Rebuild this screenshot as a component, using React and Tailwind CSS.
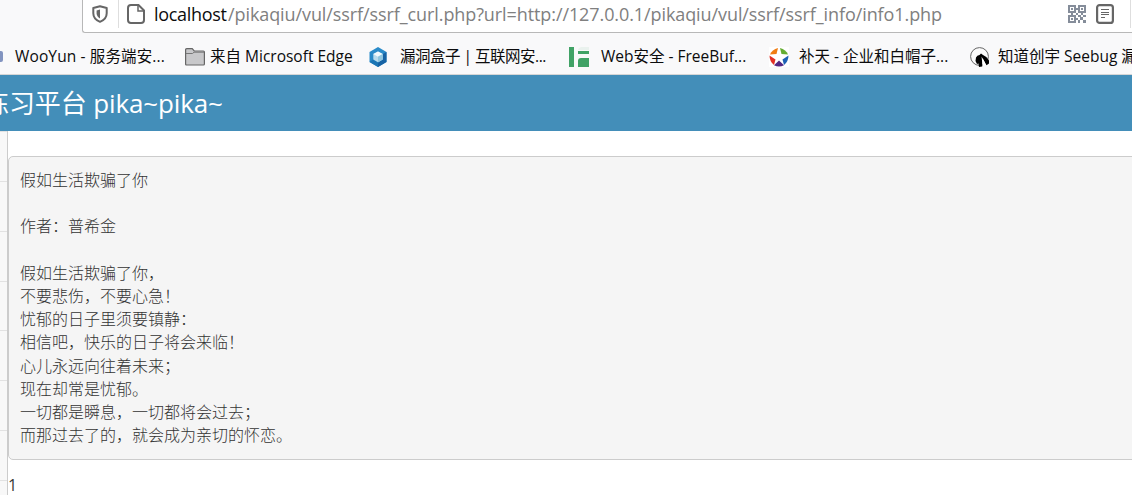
const POEM = [
  '假如生活欺骗了你',
  '',
  '作者：普希金',
  '',
  '假如生活欺骗了你，',
  '不要悲伤，不要心急！',
  '忧郁的日子里须要镇静：',
  '相信吧，快乐的日子将会来临！',
  '心儿永远向往着未来；',
  '现在却常是忧郁。',
  '一切都是瞬息，一切都将会过去；',
  '而那过去了的，就会成为亲切的怀恋。',
];

const ShieldIcon = () => (
  <svg width="16" height="18" viewBox="0 0 16 18" fill="none">
    <path d="M8 1.2 14.7 3v5.2c0 4-2.6 6.9-6.7 8.6C3.9 15.1 1.3 12.2 1.3 8.2V3Z" stroke="#666" strokeWidth="2" strokeLinejoin="round" />
    <path d="M8 4.5v9C5.8 12.2 4.6 10.5 4.6 8.2V5.4Z" fill="#666" />
  </svg>
);

const PageIcon = () => (
  <svg width="18" height="20" viewBox="0 0 18 20" fill="none">
    <path d="M4 1h7.5L17 6.5V16a3 3 0 0 1-3 3H4a3 3 0 0 1-3-3V4a3 3 0 0 1 3-3Z" stroke="#666" strokeWidth="2" />
    <path d="M11 1.5V7h5.5" stroke="#666" strokeWidth="1.5" />
  </svg>
);

const QrIcon = () => (
  <svg width="18" height="18" viewBox="0 0 18 18" fill="#858d9a">
    <path fillRule="evenodd" d="M0 0h8v8H0ZM2 2v4h4V2ZM10 0h8v8h-8ZM12 2v4h4V2ZM0 10h8v8H0ZM2 12v4h4v-4Z" />
    <path d="M3 3h2v2H3ZM13 3h2v2h-2ZM3 13h2v2H3ZM8 3h2v2H8ZM3 8h2v2H3ZM8 8h2v2H8ZM13 8h2v2h-2ZM10 10h3v2h-3ZM15 10h3v2h-3ZM12 12h3v3h-3ZM8 13h2v2H8ZM10 15h2v3h-2ZM15 15h3v3h-3Z" />
  </svg>
);

const ReaderIcon = () => (
  <svg width="18" height="20" viewBox="0 0 18 20" fill="none" stroke="#666">
    <rect x="1.1" y="1.1" width="15.8" height="17.8" rx="2.5" strokeWidth="2.2" />
    <path d="M5 5.5h8M5 8.5h8M5 10.5h8M5 13.5h4" strokeWidth="1.2" />
  </svg>
);

const FolderIcon = () => (
  <svg width="20" height="18" viewBox="0 0 20 18">
    <path d="M.6 16V1.8Q.6.6 1.8.6h5.4L9.2 3h9.2q1 0 1 1v12q0 1-1 1H1.6q-1 0-1-1Z" fill="#c8c8ca" stroke="#666" strokeWidth="1.2" />
    <path d="M1 5.5h6.500L9 4.200h10" fill="none" stroke="#777" />
  </svg>
);

const BoxIcon = () => (
  <svg width="18" height="20" viewBox="0 0 18 20">
    <path d="M9 0 17.5 5v10L9 20 .5 15V5Z" fill="#2a8bc9" />
    <path d="M17.5 5v10L9 20v-4.5l5-3V7Z" fill="#1763a4" />
    <path d="M.5 15 9 20v-4.5l-5-3Z" fill="#1b76b5" />
    <path d="M9 4.5 13.7 7v5.5L9 15.3l-4.7-2.8V7Z" fill="#b9dcec" />
    <path d="M9 4.5 13.7 7 9 9.8 4.3 7Z" fill="#f2fafd" />
    <path d="M9 9.8 13.7 7v5.5L9 15.3Z" fill="#8fc6df" />
  </svg>
);

const FreeBufIcon = () => (
  <svg width="20" height="20" viewBox="0 0 20 20" fill="#41a266">
    <path d="M0 0h5v20H0ZM9 4h11v3H9ZM9 20v-6q0-3 3-3h8v9Z" />
    <path d="M9 3q0-2 3-3h8v3Z" opacity=".08" />
  </svg>
);

const StarIcon = () => (
  <svg width="20" height="20" viewBox="0 0 20 20">
    <path fill="#fff" d="M0 0h20v20H0Z" />
    <path d="M9 1 7.500 7 1 7.500Q3 2.500 9 1Z" fill="#f07c12" />
    <path d="M11 1q6 1.500 8 6.500L12.500 7Z" fill="#64ad32" />
    <path d="M.5 8.500 6.500 12.500 5 18Q.5 14.500 .5 8.500Z" fill="#e23025" />
    <path d="M19.500 8.500 13.500 12.500 15 18q4.500-3.500 4.500-9.500Z" fill="#1d61b5" />
    <path d="m10 13.500 5 4.700q-5 2.500-10 0Z" fill="#522783" />
  </svg>
);

const SeebugIcon = () => (
  <svg width="20" height="20" viewBox="0 0 20 20">
    <circle cx="9.500" cy="9.500" r="8.900" fill="#fbfbfb" stroke="#666" strokeWidth="1" />
    <path d="M6 10.500Q7 8 9.500 8L11 6.500l2 1.500q4 1.500 6 5.500v3l-2.500 1.800L12.500 11l-.3 8.500-3.200.500-.500-3.500L7 17l-1.500-3Z" fill="#000" />
    <path d="m11.500 9.500 1.200 9 3.300-.8Z" fill="#fff" />
  </svg>
);

// Each slot is as wide as the distance to the next bookmark's icon.
const BOOKMARKS = [
  { icon: <FolderIcon />, label: '来自 Microsoft Edge', slot: 'w-[184px]', gap: 'gap-[5px]', text: '' },
  { icon: <BoxIcon />, label: '漏洞盒子 | 互联网安...', slot: 'w-[200px]', gap: 'gap-[13px]', text: 'tracking-[-0.5px]' },
  { icon: <FreeBufIcon />, label: 'Web安全 - FreeBuf...', slot: 'w-[200px]', gap: 'gap-[12px]', text: '' },
  { icon: <StarIcon />, label: '补天 - 企业和白帽子...', slot: 'w-[201px]', gap: 'gap-[10px]', text: '' },
  { icon: <SeebugIcon />, label: '知道创宇 Seebug 漏', slot: 'w-[170px]', gap: 'gap-[8px]', text: '' },
];

const UrlBar = () => (
  <div className="ml-[82px] flex h-[33px] shrink-0 items-start rounded-bl-[3px] border-b border-l border-[#b8b8b8] bg-white">
    <div className="flex h-[28px] w-full items-center">
      <div className="ml-[9px]"><ShieldIcon /></div>
      <div className="ml-[10px] h-full w-px bg-[#dedede]" />
      <div className="ml-[8px]"><PageIcon /></div>
      <div className="ml-[9px] w-[914px] whitespace-nowrap text-[18px] leading-[30px] text-[#808080]">
        <span className="inline-block w-[74px] tracking-[-0.3px] text-[#0c0c0d]">localhost</span>
        <span className="tracking-[-0.09px]">/pikaqiu/vul/ssrf/ssrf_curl.php?url=http://127.0.0.1/pikaqiu/vul/ssrf/ssrf_info/info1.php</span>
      </div>
      <QrIcon />
      <div className="ml-[10px]"><ReaderIcon /></div>
      <div className="ml-[16px] h-full w-px bg-[#dedede]" />
    </div>
  </div>
);

const BookmarkBar = () => (
  <div className="flex h-[42px] shrink-0 items-center border-b border-[#d6d6d6] pt-[6px] text-[15.5px] text-[#0c0c0d]">
    <div className="h-[11px] w-[3px] shrink-0 rounded-r-[2px] bg-[#8294c0]" />
    <div className="ml-[12px] w-[170px] shrink-0 whitespace-nowrap tracking-[0.13px]">WooYun - 服务端安...</div>
    {BOOKMARKS.map(({ icon, label, slot, gap, text }) => (
      <div key={label} className={`flex shrink-0 items-center whitespace-nowrap ${slot} ${gap}`}>
        <span className="shrink-0">{icon}</span>
        <span className={text}>{label}</span>
      </div>
    ))}
  </div>
);

export default function App() {
  return (
    <div className="flex h-[495px] w-[1132px] flex-col overflow-hidden bg-[#f9f9fa] font-['Open_Sans','Noto_Sans_CJK_SC',sans-serif]">
      <UrlBar />
      <BookmarkBar />
      <header className="flex h-[56px] shrink-0 items-center bg-[#438eb9] text-[26px] text-white">
        <h1 className="-ml-[17px] whitespace-nowrap tracking-[-0.12px]">练习平台 pika~pika~</h1>
      </header>
      <div className="flex min-h-0 flex-1">
        {/* Right edge of the menu column */}
        <aside className="w-[8px] shrink-0 border-r border-[#ccc] bg-[#f8f8f8]">
          {[0, 1, 2, 3, 4, 5, 6, 7].map((i) => (
            <div key={i} className="h-[49.86px] border-t border-[#e2e2e2]" />
          ))}
        </aside>
        <main className="min-w-0 flex-1 bg-white pt-[25px]">
          <pre className="h-[304px] w-[1140px] rounded-[5px] border border-[#ccc] bg-[#f5f5f5] px-[11px] pt-[11px] font-['Noto_Sans_CJK_SC',sans-serif] text-[16px] font-light leading-[23.2px] text-[#333]">
            {POEM.join('\n')}
          </pre>
          <p className="mt-[13px] text-[16px] leading-[24px] text-[#393939]">1</p>
        </main>
      </div>
    </div>
  );
}
